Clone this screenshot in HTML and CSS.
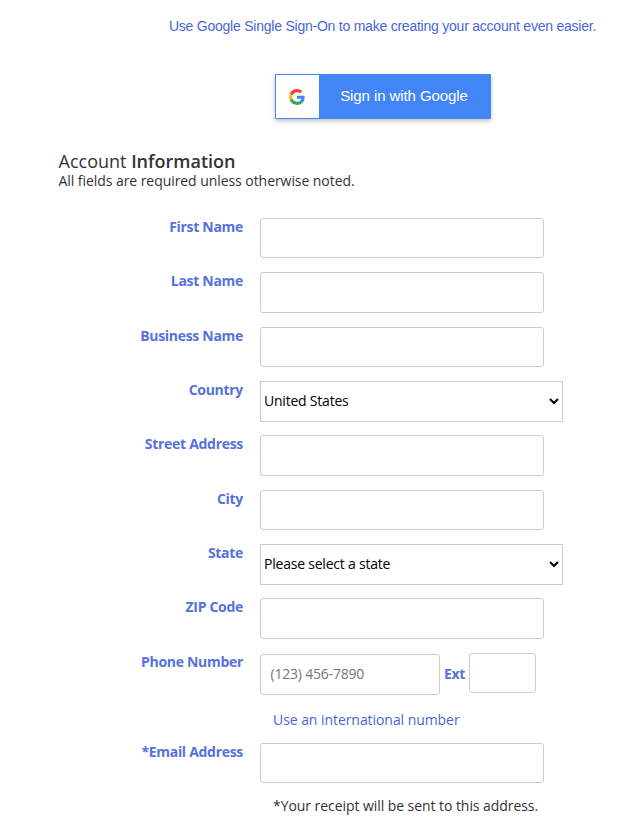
FILE: index.html
```html
<!DOCTYPE html>
<html lang="en">
<head>
    <meta charset="UTF-8">
    <meta name="viewport" content="width=device-width, initial-scale=1.0">
    <title>Account Information</title>
    <link rel="stylesheet" href="styles.css">
</head>
<body>
    <div class="sso">
        <a class="sso-text" href="#">Use Google Single Sign-On to make creating your account even easier.</a>
        <a class="google-btn" href="#">
            <span class="google-icon">
                <svg width="16" height="16" viewBox="0 0 48 48">
                    <path fill="#EA4335" d="M24 9.5c3.54 0 6.71 1.22 9.21 3.6l6.85-6.85C35.9 2.38 30.47 0 24 0 14.62 0 6.51 5.38 2.56 13.22l7.98 6.19C12.43 13.72 17.74 9.5 24 9.5z"/>
                    <path fill="#4285F4" d="M46.98 24.55c0-1.57-.15-3.09-.38-4.55H24v9.02h12.94c-.58 2.96-2.26 5.48-4.78 7.18l7.73 6c4.51-4.18 7.09-10.36 7.09-17.65z"/>
                    <path fill="#FBBC05" d="M10.53 28.59c-.48-1.45-.76-2.99-.76-4.59s.27-3.14.76-4.59l-7.98-6.19C.92 16.46 0 20.12 0 24c0 3.88.92 7.54 2.56 10.78l7.97-6.19z"/>
                    <path fill="#34A853" d="M24 48c6.48 0 11.93-2.13 15.89-5.81l-7.73-6c-2.15 1.45-4.92 2.3-8.16 2.3-6.26 0-11.57-4.22-13.47-9.91l-7.98 6.19C6.51 42.62 14.62 48 24 48z"/>
                </svg>
            </span>
            <span class="google-label">Sign in with Google</span>
        </a>
    </div>

    <form class="account-form">
        <h2>Account <strong>Information</strong></h2>
        <p class="intro">All fields are required unless otherwise noted.</p>

        <div class="row">
            <label for="first">First Name</label>
            <input type="text" id="first">
        </div>
        <div class="row">
            <label for="last">Last Name</label>
            <input type="text" id="last">
        </div>
        <div class="row">
            <label for="business">Business Name</label>
            <input type="text" id="business">
        </div>
        <div class="row">
            <label for="country">Country</label>
            <select id="country"><option>United States</option></select>
        </div>
        <div class="row">
            <label for="street">Street Address</label>
            <input type="text" id="street">
        </div>
        <div class="row">
            <label for="city">City</label>
            <input type="text" id="city">
        </div>
        <div class="row">
            <label for="state">State</label>
            <select id="state"><option>Please select a state</option></select>
        </div>
        <div class="row">
            <label for="zip">ZIP Code</label>
            <input type="text" id="zip">
        </div>
        <div class="row">
            <label for="phone">Phone Number</label>
            <input type="text" id="phone" class="phone" placeholder="(123) 456-7890">
            <label for="ext" class="ext-label">Ext</label>
            <input type="text" id="ext" class="ext">
        </div>
        <a class="intl" href="#">Use an international number</a>
        <div class="row email-row">
            <label for="email">*Email Address</label>
            <input type="text" id="email">
        </div>
        <p class="note">*Your receipt will be sent to this address.</p>
    </form>
</body>
</html>
```

FILE: styles.css
```css
* {
    box-sizing: border-box;
}

body {
    margin: 0;
    background: #fff;
    color: #333;
    font-family: "Open Sans", Arial, sans-serif;
    font-size: 14px;
    line-height: 20px;
    letter-spacing: -0.06px;
}

a {
    color: #4866d8;
    text-decoration: none;
}

.sso {
    display: flex;
    flex-direction: column;
    align-items: center;
    padding: 16px 0 0 126px;
    font-family: "Liberation Sans", Arial, sans-serif;
}

.sso-text {
    letter-spacing: -0.23px;
}

.google-btn {
    display: flex;
    width: 216px;
    height: 45px;
    margin-top: 38px;
    padding: 1px;
    border-radius: 1px;
    background: #4285f4;
    color: #fff;
    box-shadow: 0 2px 4px rgba(0, 0, 0, 0.25);
}

.google-icon {
    display: flex;
    align-items: center;
    justify-content: center;
    width: 43px;
    background: #fff;
}

.google-label {
    flex: 1;
    text-align: center;
    font-size: 15px;
    line-height: 42px;
    letter-spacing: -0.08px;
}

.account-form {
    padding: 32px 0 0 58px;
}

h2 {
    margin: 0;
    font-size: 18px;
    font-weight: 400;
    line-height: 20px;
    letter-spacing: 0;
}

h2 strong {
    font-weight: 600;
}

h2,
.intro {
    padding-left: 0.5px;
}

.intro {
    margin: 0 0 27px;
}

.row {
    display: flex;
    align-items: flex-start;
    height: 40.33px;
    margin-bottom: 14px;
}

label {
    width: 185px;
    margin-right: 17px;
    color: #5572dc;
    font-weight: 700;
    line-height: 18px;
    letter-spacing: -0.3px;
    text-align: right;
}

input,
select {
    width: 284px;
    height: 100%;
    padding: 0 9px;
    border: 1px solid #ccc;
    border-radius: 3px;
    background: #fff;
    font: inherit;
}

input {
    letter-spacing: -0.2px;
}

select {
    width: 303px;
    height: 41px;
    padding: 0 3px 2px 0;
    border-radius: 0;
    color: #000;
    letter-spacing: -0.22px;
    text-indent: -1px;
}

.phone {
    width: 180px;
    height: 41px;
    margin-top: 1px;
    padding: 0 9px 2px 9.5px;
}

.ext-label {
    width: auto;
    margin: 12px 4px 0;
}

.ext {
    width: 67px;
}

.intl {
    display: block;
    margin: 17px 0 13px 215px;
}

.email-row {
    margin-bottom: 13px;
}

.note {
    margin: 0 0 0 215px;
}
```
